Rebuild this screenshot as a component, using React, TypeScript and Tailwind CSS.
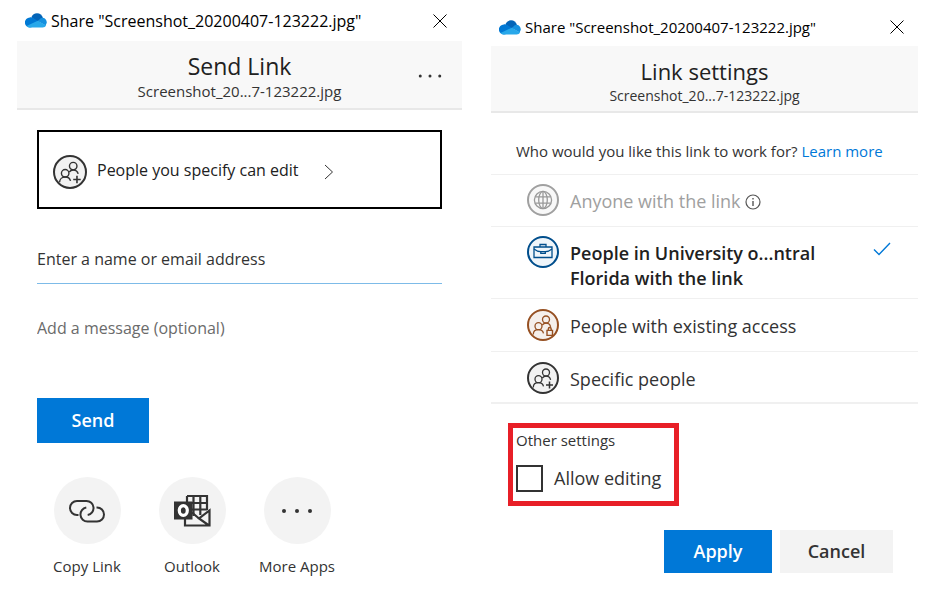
import { useState } from "react";
import type { ReactNode } from "react";
import clsx from "clsx";

const OneDriveIcon = () => (
  <svg viewBox="0 0 22 15" className="h-[15px] w-[22px] shrink-0" aria-hidden="true">
    <path d="M6.4 4.3C7.4 1.8 9.4.3 12 .3c2.9 0 5.2 1.9 5.9 4.5L12 9z" fill="#0364b8" />
    <path d="M5 14.4A5 5 0 0 1 4.800 4.400c1.300-.2 2.600.1 3.700.8l6.500 4-8.500 5z" fill="#0078d4" />
    <path d="M13 8.200l2.300-2.600c.8-.6 1.700-.8 2.600-.8 2.300.3 4 2.500 3.900 5l-1.200 2.700z" fill="#1490df" />
    <path d="M1.500 12.900l11.300-5.100 8.300 4.700c-.7 1.200-1.900 2-3.400 2H5c-1.400 0-2.700-.6-3.500-1.600z" fill="#28a8ea" />
  </svg>
);

const CloseIcon = () => (
  <svg viewBox="0 0 14 14" className="size-[14px]" fill="none" stroke="currentColor" aria-hidden="true">
    <path d="M.5.5l13 13M13.5.5l-13 13" />
  </svg>
);

const DotsIcon = ({ className }: { className: string }) => (
  <svg viewBox="0 0 32 6" className={className} fill="currentColor" aria-hidden="true">
    <circle cx="3" cy="3" r="2" />
    <circle cx="16" cy="3" r="2" />
    <circle cx="29" cy="3" r="2" />
  </svg>
);

const PeopleGlyph = ({ badge }: { badge: "plus" | "lock" }) => (
  <svg viewBox="3 4 28 28" className="size-full" fill="none" stroke="currentColor" strokeWidth="1.3" aria-hidden="true">
    <circle cx="20" cy="12.5" r="3.500" />
    <circle cx="12.500" cy="19.200" r="3.500" />
    <path d="M7.300 27.500c0-3 2.300-4.800 5.200-4.800 2.400 0 4.400 1.300 5 3.600" />
    <path d="M16.300 18c.9-1.200 2.200-1.900 3.700-1.900 2.300 0 4.100 1.500 4.600 3.700" />
    {badge === "plus" ? (
      <path d="M23.500 21.500v7M20 25h7" strokeWidth="1.5" />
    ) : (
      <path d="M21 23.400h5.500v5H21zM22.300 23.400v-1.500a1.400 1.400 0 0 1 2.900 0v1.500" strokeWidth="1.4" />
    )}
  </svg>
);

const GlobeGlyph = () => (
  <svg viewBox="3 3 28 28" className="size-full" fill="none" stroke="currentColor" strokeWidth="1.3" aria-hidden="true">
    <circle cx="17" cy="17" r="8.600" />
    <ellipse cx="17" cy="17" rx="4.300" ry="8.600" />
    <path d="M9.200 13.800h15.600M9.200 20.200h15.600M17 8.400v17.200" />
  </svg>
);

const BriefcaseGlyph = () => (
  <svg viewBox="3 3 28 28" className="size-full" fill="none" stroke="currentColor" strokeWidth="1.3" aria-hidden="true">
    <path d="M8 12h18v10.500H8zM14 12V9.500h6V12" />
    <path d="M8 14c2.500 2 4.500 2.700 6.800 2.700h4.500c2.300 0 4.200-.7 6.700-2.700" />
    <path d="M14.800 16.500v1.800h4.500v-1.800" />
  </svg>
);

const LinkGlyph = () => (
  <svg viewBox="0 0 36 24" className="h-6 w-9" fill="none" stroke="currentColor" strokeWidth="2" aria-hidden="true">
    <path d="M9.500 16H8A7 7 0 0 1 8 2h9.500a7 7 0 0 1 1.200 13.900" />
    <path d="M27.500 8.500H28a7 7 0 0 1 0 14h-9.500a7 7 0 0 1-1.200-13.900" />
  </svg>
);

const OutlookGlyph = () => (
  <svg viewBox="0 0 37 33" className="h-[33px] w-[37px]" fill="none" stroke="currentColor" strokeWidth="2.2" aria-hidden="true">
    <path d="M13 2h20v14M13 2v6M19.500 2v20M26.300 2v19M13 9h20M18 15.500h15" />
    <path d="M11 24.500V31.500h24.500V16.500L25 24.500 35 31.500M18 18.500l7 6" />
    <rect x="0" y="7.500" width="18.500" height="18" fill="currentColor" stroke="none" />
    <ellipse cx="9.300" cy="16.500" rx="4" ry="4.800" stroke="#fff" strokeWidth="3.200" />
  </svg>
);

const InfoIcon = () => (
  <svg viewBox="0 0 16 16" className="size-4 text-[#555]" fill="none" stroke="currentColor" aria-hidden="true">
    <circle cx="8" cy="8" r="7" strokeWidth="1.2" />
    <path d="M8 7v5M8 4v1.500" strokeWidth="1.4" />
  </svg>
);

const TitleBar = ({ className }: { className: string }) => (
  <div className={clsx("flex items-center gap-1 pl-2", className)}>
    <OneDriveIcon />
    <p className="grow whitespace-nowrap text-black">Share "Screenshot_20200407-123222.jpg"</p>
    <button type="button" aria-label="Close" className="cursor-pointer text-black">
      <CloseIcon />
    </button>
  </div>
);

type HeaderProps = {
  title: string;
  className: string;
  titleClassName: string;
  children?: ReactNode;
};

const Header = ({ title, className, titleClassName, children }: HeaderProps) => (
  <header className={clsx("relative border-b-2 border-[#e8e8e8] bg-[#f8f8f8] text-center text-[#333]", className)}>
    <h2 className={clsx("leading-[30px] text-[#212121]", titleClassName)}>{title}</h2>
    <p className="leading-5">Screenshot_20...7-123222.jpg</p>
    {children}
  </header>
);

const apps = [
  { label: "Copy Link", icon: <LinkGlyph /> },
  { label: "Outlook", icon: <OutlookGlyph /> },
  { label: "More Apps", icon: <DotsIcon className="h-[6px] w-8" /> },
];

const SendLink = () => (
  <section>
    <TitleBar className="h-[41px] pr-[15px] text-[16px]" />
    <Header title="Send Link" className="pt-[10px] pb-[7px] text-[15px]" titleClassName="text-[23px]">
      <button type="button" aria-label="More options" className="absolute top-8 right-5 cursor-pointer">
        <DotsIcon className="h-[6px] w-6" />
      </button>
    </Header>

    <form className="px-5 pt-5" onSubmit={(e) => e.preventDefault()}>
      <button
        type="button"
        className="flex h-[79px] w-full cursor-pointer items-center border-2 border-black px-[14px] pt-1 text-left"
      >
        <span className="size-[34px] shrink-0 rounded-full border-2 border-[#333] bg-[#f2f2f2] text-[#333]">
          <PeopleGlyph badge="plus" />
        </span>
        <span className="ml-[10px] pb-1 text-[16px] text-[#212121]">People you specify can edit</span>
        <svg viewBox="0 0 10 16" className="ml-[25px] h-4 w-[10px]" fill="none" stroke="#333" aria-hidden="true">
          <path d="M1 1l7.500 7L1 15" />
        </svg>
      </button>
      <input
        type="text"
        aria-label="Enter a name or email address"
        placeholder="Enter a name or email address"
        className="mt-[26px] h-[49px] w-full border-b border-[#7dbbe8] text-[16px] outline-none placeholder:text-[#333]"
      />
      <textarea
        aria-label="Add a message (optional)"
        placeholder="Add a message (optional)"
        className="mt-8 block h-[82px] w-full resize-none text-[16px] leading-6 outline-none placeholder:text-[#6b6b6b]"
      />
      <button
        type="submit"
        className="h-[45px] w-[112px] cursor-pointer bg-[#0078d7] text-[18px] font-semibold text-white"
      >
        Send
      </button>
    </form>

    <div className="flex gap-[25px] pt-[34px] pl-[30px]">
      {apps.map((app) => (
        <button key={app.label} type="button" className="flex w-20 cursor-pointer flex-col items-center gap-[10px] text-[#333]">
          <span className="flex size-[67px] items-center justify-center rounded-full bg-[#f3f3f3]">{app.icon}</span>
          <span className="text-[15px] leading-6 whitespace-nowrap">{app.label}</span>
        </button>
      ))}
    </div>
  </section>
);

const options = [
  {
    id: "anyone",
    label: "Anyone with the link",
    icon: <GlobeGlyph />,
    badge: "border-[#a0a0a0] bg-[#f8f8f8] text-[#999]",
    row: "pt-[9px] pb-[10px]",
    disabled: true,
  },
  {
    id: "organization",
    label: "People in University o...ntral Florida with the link",
    icon: <BriefcaseGlyph />,
    badge: "border-[#004e8c] bg-[#eff5fa] text-[#004e8c]",
    row: "pt-[9px] pb-[7px]",
  },
  {
    id: "existing",
    label: "People with existing access",
    icon: <PeopleGlyph badge="lock" />,
    badge: "border-[#965022] bg-[#f5efeb] text-[#965022]",
    row: "py-[10px]",
  },
  {
    id: "specific",
    label: "Specific people",
    icon: <PeopleGlyph badge="plus" />,
    badge: "border-[#333] bg-[#f2f2f2] text-[#333]",
    row: "pt-[10px] pb-2",
  },
];

const LinkSettings = () => {
  const [scope, setScope] = useState("organization");
  const [canEdit, setCanEdit] = useState(false);

  return (
    <section>
      <TitleBar className="h-[46px] pt-2 pr-[14px] text-[15px]" />
      <Header title="Link settings" className="pt-[10px] pb-[5px] text-[14px]" titleClassName="text-[22px]" />

      <form onSubmit={(e) => e.preventDefault()}>
        <fieldset>
          <p className="pt-[26px] pb-[11px] pl-[25px] text-[15px] leading-6 whitespace-nowrap text-[#333]">
            Who would you like this link to work for?{" "}
            <a href="#learn-more" className="text-[#0078d7]">
              Learn more
            </a>
          </p>
          {options.map((option) => {
            const selected = scope === option.id;

            return (
              <label
                key={option.id}
                className={clsx(
                  "flex items-start border-t border-[#f0f0f0] pr-[27px] pl-9",
                  option.row,
                  !option.disabled && "cursor-pointer"
                )}
              >
                <input
                  type="radio"
                  name="scope"
                  className="sr-only"
                  checked={selected}
                  disabled={option.disabled}
                  onChange={() => setScope(option.id)}
                />
                <span className={clsx("size-8 shrink-0 rounded-full border-2", option.badge)}>{option.icon}</span>
                <span
                  className={clsx(
                    "ml-[11px] flex max-w-[260px] items-center gap-1 pt-[5px] text-[18px] leading-[25px]",
                    selected ? "font-semibold text-[#212121]" : option.disabled ? "text-[#a0a0a0]" : "text-[#333]"
                  )}
                >
                  {option.label}
                  {option.disabled && <InfoIcon />}
                </span>
                {selected && (
                  <svg viewBox="0 0 18 14" className="mt-[6px] ml-auto h-[14px] w-[18px]" fill="none" stroke="#0078d7" strokeWidth="1.4" aria-hidden="true">
                    <path d="M1 7.500l5 5L17 1" />
                  </svg>
                )}
              </label>
            );
          })}
        </fieldset>

        <div className="border-t-2 border-[#f0f0f0] pt-[19px] pl-[17px]">
          <div className="h-[83px] w-[171px] border-[5px] border-[#e81f27] pl-[3px]">
            <p className="text-[15px] leading-6 text-[#333]">Other settings</p>
            <label className="mt-3 flex cursor-pointer items-center gap-[11px] text-[18px] leading-7 whitespace-nowrap text-[#333]">
              <input
                type="checkbox"
                checked={canEdit}
                onChange={(e) => setCanEdit(e.target.checked)}
                className="size-[27px] shrink-0 appearance-none border-2 border-[#333] bg-white checked:bg-[#0078d7]"
              />
              Allow editing
            </label>
          </div>
        </div>

        <div className="flex justify-end gap-2 pt-6 pr-[25px] text-[18px] font-semibold">
          <button type="submit" className="h-[43px] w-[108px] cursor-pointer bg-[#0078d7] text-white">
            Apply
          </button>
          <button type="button" className="h-[43px] w-[113px] cursor-pointer bg-[#f3f3f3] text-[#333]">
            Cancel
          </button>
        </div>
      </form>
    </section>
  );
};

const App = () => {
  return (
    <main className="grid min-h-screen grid-cols-[445fr_427fr] gap-[29px] bg-white pr-[21px] pl-[17px] font-['Open_Sans',sans-serif]">
      <SendLink />
      <LinkSettings />
    </main>
  );
};

export default App;
